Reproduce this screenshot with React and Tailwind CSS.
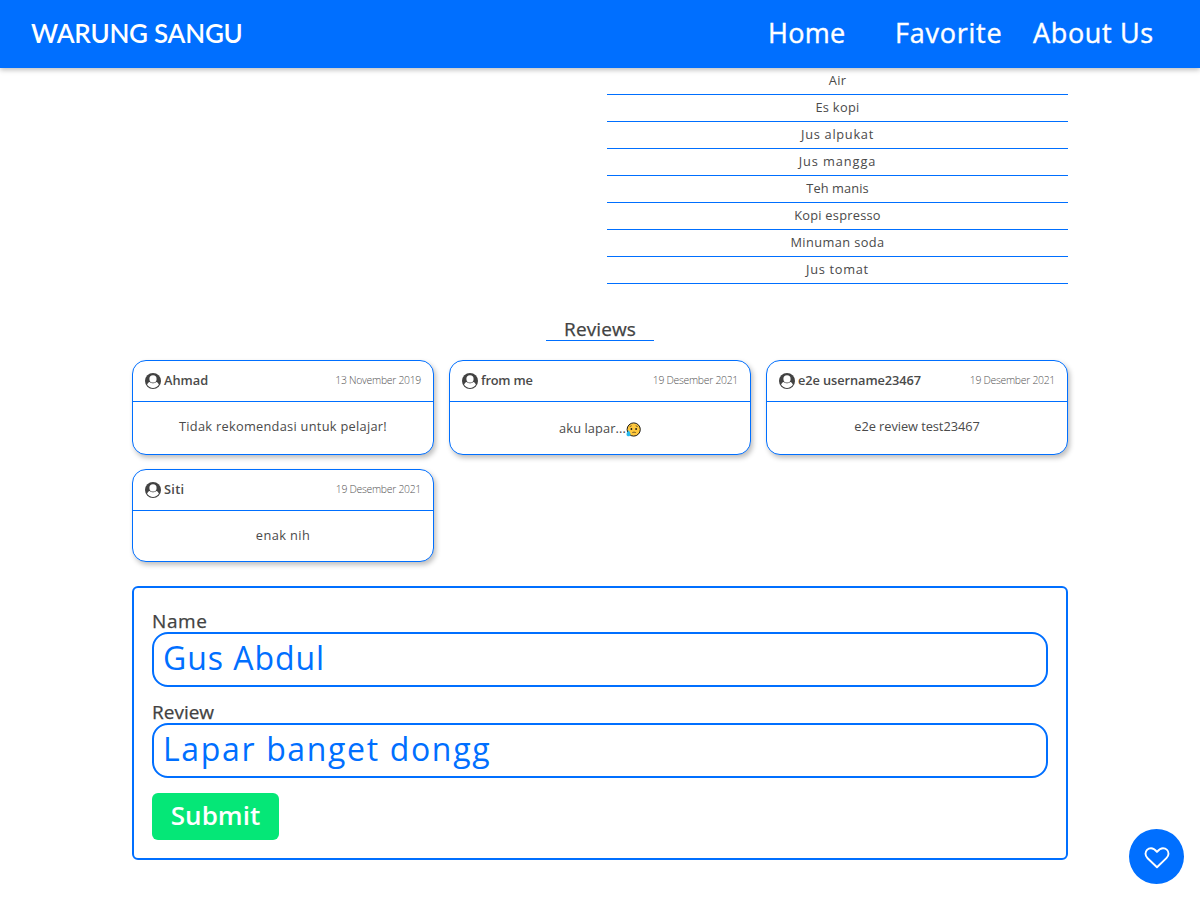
const NAV = [
  { label: "Home", cls: "w-[76px] tracking-[0.3px]" },
  { label: "Favorite", cls: "ml-[51px] w-[107px] tracking-[0.75px]" },
  { label: "About Us", cls: "ml-[31px] w-[121px] tracking-[0.65px]" },
];

const DRINKS = [
  { name: "Air", cls: "tracking-[0.3px]" },
  { name: "Es kopi", cls: "tracking-[0.3px]" },
  { name: "Jus alpukat", cls: "tracking-[0.7px]" },
  { name: "Jus mangga", cls: "tracking-[0.9px]" },
  { name: "Teh manis", cls: "tracking-[0.1px]" },
  { name: "Kopi espresso", cls: "tracking-[0.25px]" },
  { name: "Minuman soda", cls: "tracking-[0.4px]" },
  { name: "Jus tomat", cls: "tracking-[0.7px]" },
];

const REVIEWS = [
  { name: "Ahmad", nameCls: "", date: "13 November 2019", text: "Tidak rekomendasi untuk pelajar!", textCls: "tracking-[0.28px]" },
  { name: "from me", nameCls: "tracking-[-0.2px]", date: "19 Desember 2021", text: "aku lapar...", textCls: "tracking-[0.1px] pt-[5px]", emoji: true },
  { name: "e2e username23467", nameCls: "tracking-[-0.08px]", date: "19 Desember 2021", text: "e2e review test23467", textCls: "tracking-[-0.05px]" },
  { name: "Siti", nameCls: "tracking-[0.3px]", date: "19 Desember 2021", text: "enak nih", textCls: "tracking-[0.4px]" },
];

function UserIcon() {
  return (
    <svg className="mb-px size-4 shrink-0" viewBox="0 0 16 16" fill="none">
      <circle cx="8" cy="8" r="8" fill="#424242" />
      <path d="M2.1 11.8C2.4 10.4 3.4 9.1 4.9 8.9C5.8 9.9 6.8 10.3 8 10.3C9.2 10.3 10.2 9.9 11.1 8.9C12.6 9.1 13.6 10.4 13.9 11.8A7.1 7.1 0 0 1 2.1 11.8Z" fill="#fff" />
      <circle cx="8" cy="5.9" r="3.6" fill="#fff" />
    </svg>
  );
}

function SadFace() {
  return (
    <svg className="size-[15px] shrink-0" viewBox="0 0 15 15" fill="none">
      <circle cx="7.7" cy="7.5" r="6.6" fill="#ffc83d" stroke="#1b1b1b" strokeWidth="1" />
      <path d="M3.7 4.7L5.7 3.7M9.7 3.7L11.7 4.7M6.3 10.6Q8 9.6 9.8 10.6" stroke="#5b4520" strokeWidth="0.8" />
      <circle cx="5.4" cy="7" r="0.9" fill="#1b1b1b" />
      <circle cx="10.1" cy="7" r="0.9" fill="#1b1b1b" />
      <path d="M2.6 8.2C3.5 9.8 4.5 10.8 4.5 12.2C4.5 13.5 3.6 14.3 2.5 14.3C1.4 14.3 0.5 13.5 0.5 12.2C0.5 10.8 1.8 9.7 2.6 8.2Z" fill="#26b9ee" />
    </svg>
  );
}

function HeartIcon() {
  return (
    <svg className="mt-[2px] h-[22px] w-[26px]" viewBox="0 0 26 22" fill="none" stroke="currentColor" strokeWidth="1.9" strokeLinejoin="round">
      <path d="M13 20.3L3.6 11.2C2.4 10 1.5 8.5 1.5 6.8C1.5 3.5 3.8 1.3 7 1.3C9.6 1.3 11.3 2.9 13 4.9C14.7 2.9 16.4 1.3 19 1.3C22.2 1.3 24.5 3.5 24.5 6.8C24.5 8.5 23.6 10 22.4 11.2Z" />
    </svg>
  );
}

function ReviewCard({ name, nameCls, date, text, textCls, emoji }) {
  return (
    <article className="flex flex-col rounded-[14px] border border-[#006fff] bg-white shadow-[2px_3px_5px_rgba(0,0,0,0.25)]">
      <header className="flex h-[41px] items-center border-b border-[#006fff] px-3">
        <UserIcon />
        <span className={`ml-[3px] grow text-[12.8px] font-semibold text-[#4a4a4a] ${nameCls}`}>{name}</span>
        <span className="text-[10.4px] font-light tracking-[-0.28px] text-[#555]">{date}</span>
      </header>
      <p className={`flex h-[49px] items-center justify-center text-[12.8px] ${textCls}`}>
        {text}
        {emoji && <SadFace />}
      </p>
    </article>
  );
}

function Field({ label, labelCls, value, valueCls }) {
  return (
    <label className="flex flex-col">
      <span className={`h-[22px] text-[19px] leading-[22px] text-[#424242] [-webkit-text-stroke:0.25px] ${labelCls}`}>{label}</span>
      <input
        defaultValue={value}
        className={`h-[55px] rounded-[16px] border-2 border-[#006fff] pr-2 pb-[5px] pl-[9px] text-[32px] text-[#006fff] outline-none ${valueCls}`}
      />
    </label>
  );
}

export default function App() {
  return (
    <div className="flex h-[900px] flex-col overflow-hidden bg-white font-['Open_Sans',sans-serif] text-[#4a4a4a]">
      <header className="z-10 flex h-[68px] shrink-0 items-center justify-between bg-[#006fff] pr-[46px] pb-[2px] pl-[31px] text-white shadow-[0_2px_5px_rgba(0,0,0,0.26)]">
        <h1 className="font-['Lato',sans-serif] text-[26px] font-semibold tracking-[-0.25px]">WARUNG SANGU</h1>
        <nav className="flex text-[27px] whitespace-nowrap [-webkit-text-stroke:0.4px]">
          {NAV.map((n) => (
            <a key={n.label} className={n.cls}>{n.label}</a>
          ))}
        </nav>
      </header>

      <main className="mx-auto flex w-[936px] flex-col">
        <ul className="w-[461px] self-end">
          {DRINKS.map((d) => (
            <li key={d.name} className={`h-[27px] border-b border-[#006fff] text-center text-[12.8px] leading-[24px] ${d.cls}`}>{d.name}</li>
          ))}
        </ul>

        <h2 className="mt-[34px] h-[23px] w-[108px] self-center border-b border-[#006fff] text-center text-[19px] leading-[22px] tracking-[0.1px] text-[#424242] [-webkit-text-stroke:0.25px]">
          Reviews
        </h2>

        <section className="mt-[19px] grid grid-cols-3 grid-rows-[95px_93px] gap-x-[15px] gap-y-[14px]">
          {REVIEWS.map((r) => (
            <ReviewCard key={r.name} {...r} />
          ))}
        </section>

        <form className="mt-6 flex h-[274px] flex-col items-stretch rounded-md border-2 border-[#006fff] px-[18px] pt-[22px]">
          <Field label="Name" labelCls="tracking-[0.6px]" value="Gus Abdul" valueCls="tracking-[0.95px]" />
          <div className="h-[14px]" />
          <Field label="Review" labelCls="tracking-[0px]" value="Lapar banget dongg" valueCls="tracking-[1.65px]" />
          <button type="button" className="mt-[15px] h-[47px] w-[127px] rounded-md bg-[#05e777] pb-[3px] text-[26px] leading-none font-semibold text-white">
            Submit
          </button>
        </form>
      </main>

      <button type="button" className="fixed right-4 bottom-4 flex size-[55px] items-center justify-center rounded-full bg-[#006fff] text-white">
        <HeartIcon />
      </button>
    </div>
  );
}
